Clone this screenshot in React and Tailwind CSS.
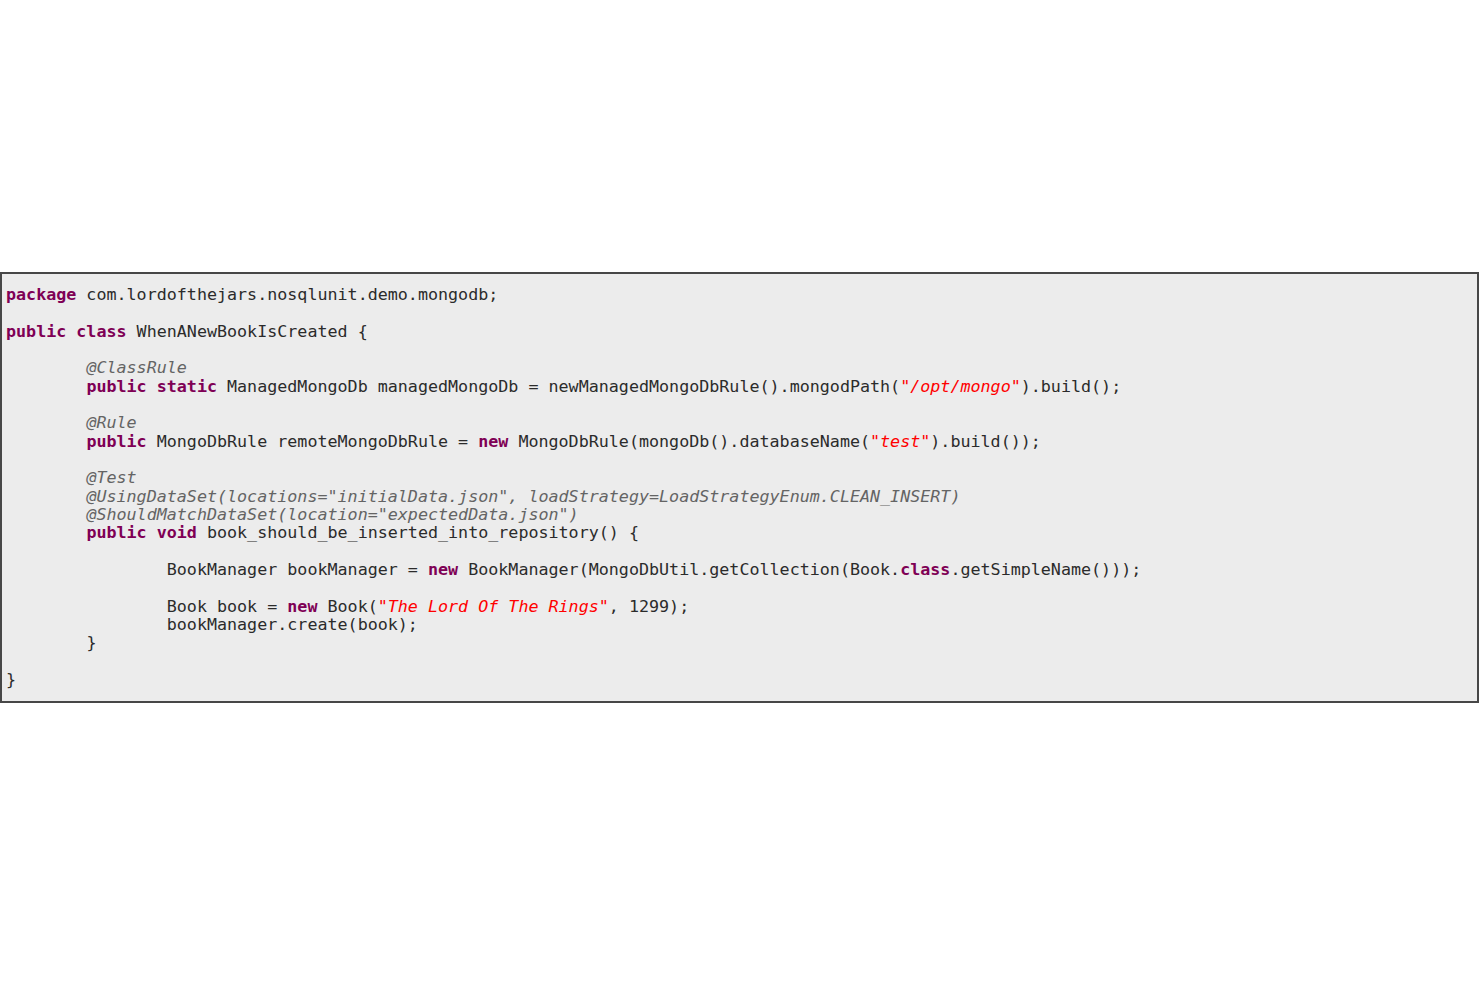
import React from 'react';

const K = ({ children }) => <span className="text-[#7f0055] font-bold">{children}</span>;
const A = ({ children }) => <span className="text-[#646464] italic">{children}</span>;
const S = ({ children }) => <span className="text-[#ff0000] italic">{children}</span>;

const lines = [
  <><K>package</K> com.lordofthejars.nosqlunit.demo.mongodb;</>,
  '',
  <><K>public</K> <K>class</K> WhenANewBookIsCreated {'{'}</>,
  '',
  <>{'        '}<A>@ClassRule</A></>,
  <>{'        '}<K>public</K> <K>static</K> ManagedMongoDb managedMongoDb = newManagedMongoDbRule().mongodPath(<S>"/opt/mongo"</S>).build();</>,
  '',
  <>{'        '}<A>@Rule</A></>,
  <>{'        '}<K>public</K> MongoDbRule remoteMongoDbRule = <K>new</K> MongoDbRule(mongoDb().databaseName(<S>"test"</S>).build());</>,
  '',
  <>{'        '}<A>@Test</A></>,
  <>{'        '}<A>@UsingDataSet(locations="initialData.json", loadStrategy=LoadStrategyEnum.CLEAN_INSERT)</A></>,
  <>{'        '}<A>@ShouldMatchDataSet(location="expectedData.json")</A></>,
  <>{'        '}<K>public</K> <K>void</K> book_should_be_inserted_into_repository() {'{'}</>,
  '',
  <>{'                '}BookManager bookManager = <K>new</K> BookManager(MongoDbUtil.getCollection(Book.<K>class</K>.getSimpleName()));</>,
  '',
  <>{'                '}Book book = <K>new</K> Book(<S>"The Lord Of The Rings"</S>, 1299);</>,
  <>{'                '}bookManager.create(book);</>,
  <>{'        '}{'}'}</>,
  '',
  <>{'}'}</>,
];

export default function App() {
  return (
    <div className="w-[1480px] h-[987px] bg-white pt-[272px]">
      <div className="w-[1479px] bg-[#ececec] border-2 border-[#474747] pl-[4px] pt-[11px] pb-[13px]">
        <pre
          className="m-0 text-[16.7px] leading-[18.33px] text-[#2b2b2b] whitespace-pre"
          style={{ fontFamily: '"DejaVu Sans Mono", monospace' }}
        >
          {lines.map((l, i) => (
            <div key={i} className="h-[18.33px]">{l}</div>
          ))}
        </pre>
      </div>
    </div>
  );
}
